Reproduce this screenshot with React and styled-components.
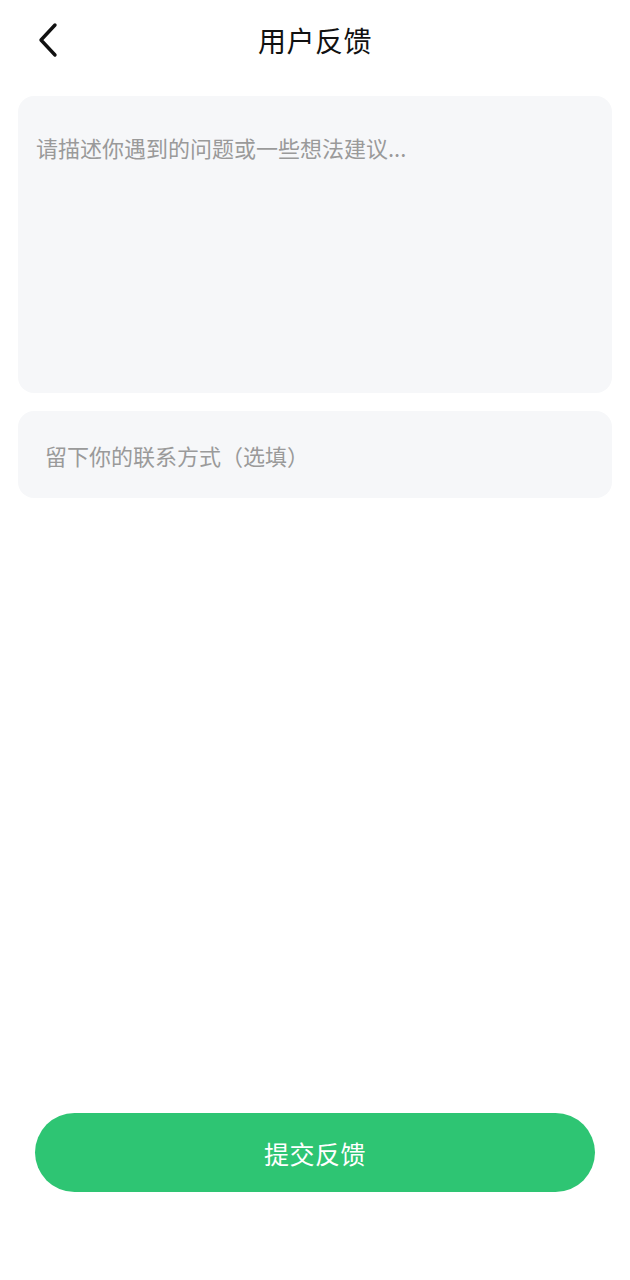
import React, { useState } from "react";
import styled, { createGlobalStyle } from "styled-components";

const GlobalStyle = createGlobalStyle`
  html, body {
    margin: 0;
    padding: 0;
    background: #fff;
  }
  body {
    font-family: "Noto Sans CJK SC", "Noto Sans", sans-serif;
  }
  * { box-sizing: border-box; }
`;

const Page = styled.div`
  width: 630px;
  height: 1280px;
  display: flex;
  flex-direction: column;
  background: #fff;
`;

const Header = styled.div`
  height: 80px;
  position: relative;
  display: flex;
  align-items: center;
  justify-content: center;
`;

const BackButton = styled.button`
  position: absolute;
  left: 28px;
  top: 18px;
  width: 40px;
  height: 44px;
  padding: 0;
  border: none;
  background: none;
  display: flex;
  align-items: center;
  justify-content: center;
`;

const Title = styled.h1`
  margin: 0;
  font-size: 28px;
  font-weight: 400;
  color: #111;
  letter-spacing: 0.5px;
`;

const Form = styled.div`
  padding: 16px 18px 0;
  display: flex;
  flex-direction: column;
  gap: 18px;
`;

const Field = styled.div`
  background: #f6f7f9;
  border-radius: 16px;
  height: ${(p) => p.$height}px;
  padding: ${(p) => p.$pad};
  display: flex;
`;

const TextArea = styled.textarea`
  flex: 1;
  border: none;
  outline: none;
  resize: none;
  background: transparent;
  font-family: inherit;
  font-size: 22px;
  line-height: 32px;
  color: #333;
  padding: 0;
  &::placeholder { color: #9a9a9a; }
`;

const Input = styled.input`
  flex: 1;
  border: none;
  outline: none;
  background: transparent;
  font-family: inherit;
  font-size: 22px;
  color: #333;
  padding: 0;
  &::placeholder { color: #9a9a9a; }
`;

const Spacer = styled.div`
  flex: 1;
`;

const Footer = styled.div`
  padding: 0 35px 88px;
`;

const SubmitButton = styled.button`
  width: 100%;
  height: 79px;
  border: none;
  border-radius: 40px;
  background: #2ec573;
  color: #fff;
  font-family: inherit;
  font-size: 25px;
  letter-spacing: 0.5px;
`;

export default function App() {
  const [content, setContent] = useState("");
  const [contact, setContact] = useState("");

  return (
    <Page>
      <GlobalStyle />
      <Header>
        <BackButton aria-label="返回">
          <svg width="26" height="36" viewBox="0 0 26 36" fill="none">
            <path d="M20 3 L6 18 L20 33" stroke="#111" strokeWidth="3.4" strokeLinecap="round" strokeLinejoin="round" />
          </svg>
        </BackButton>
        <Title>用户反馈</Title>
      </Header>
      <Form>
        <Field $height={297} $pad="35px 18px">
          <TextArea
            value={content}
            onChange={(e) => setContent(e.target.value)}
            placeholder="请描述你遇到的问题或一些想法建议..."
          />
        </Field>
        <Field $height={87} $pad="0 27px">
          <Input
            value={contact}
            onChange={(e) => setContact(e.target.value)}
            placeholder="留下你的联系方式（选填）"
          />
        </Field>
      </Form>
      <Spacer />
      <Footer>
        <SubmitButton>提交反馈</SubmitButton>
      </Footer>
    </Page>
  );
}
